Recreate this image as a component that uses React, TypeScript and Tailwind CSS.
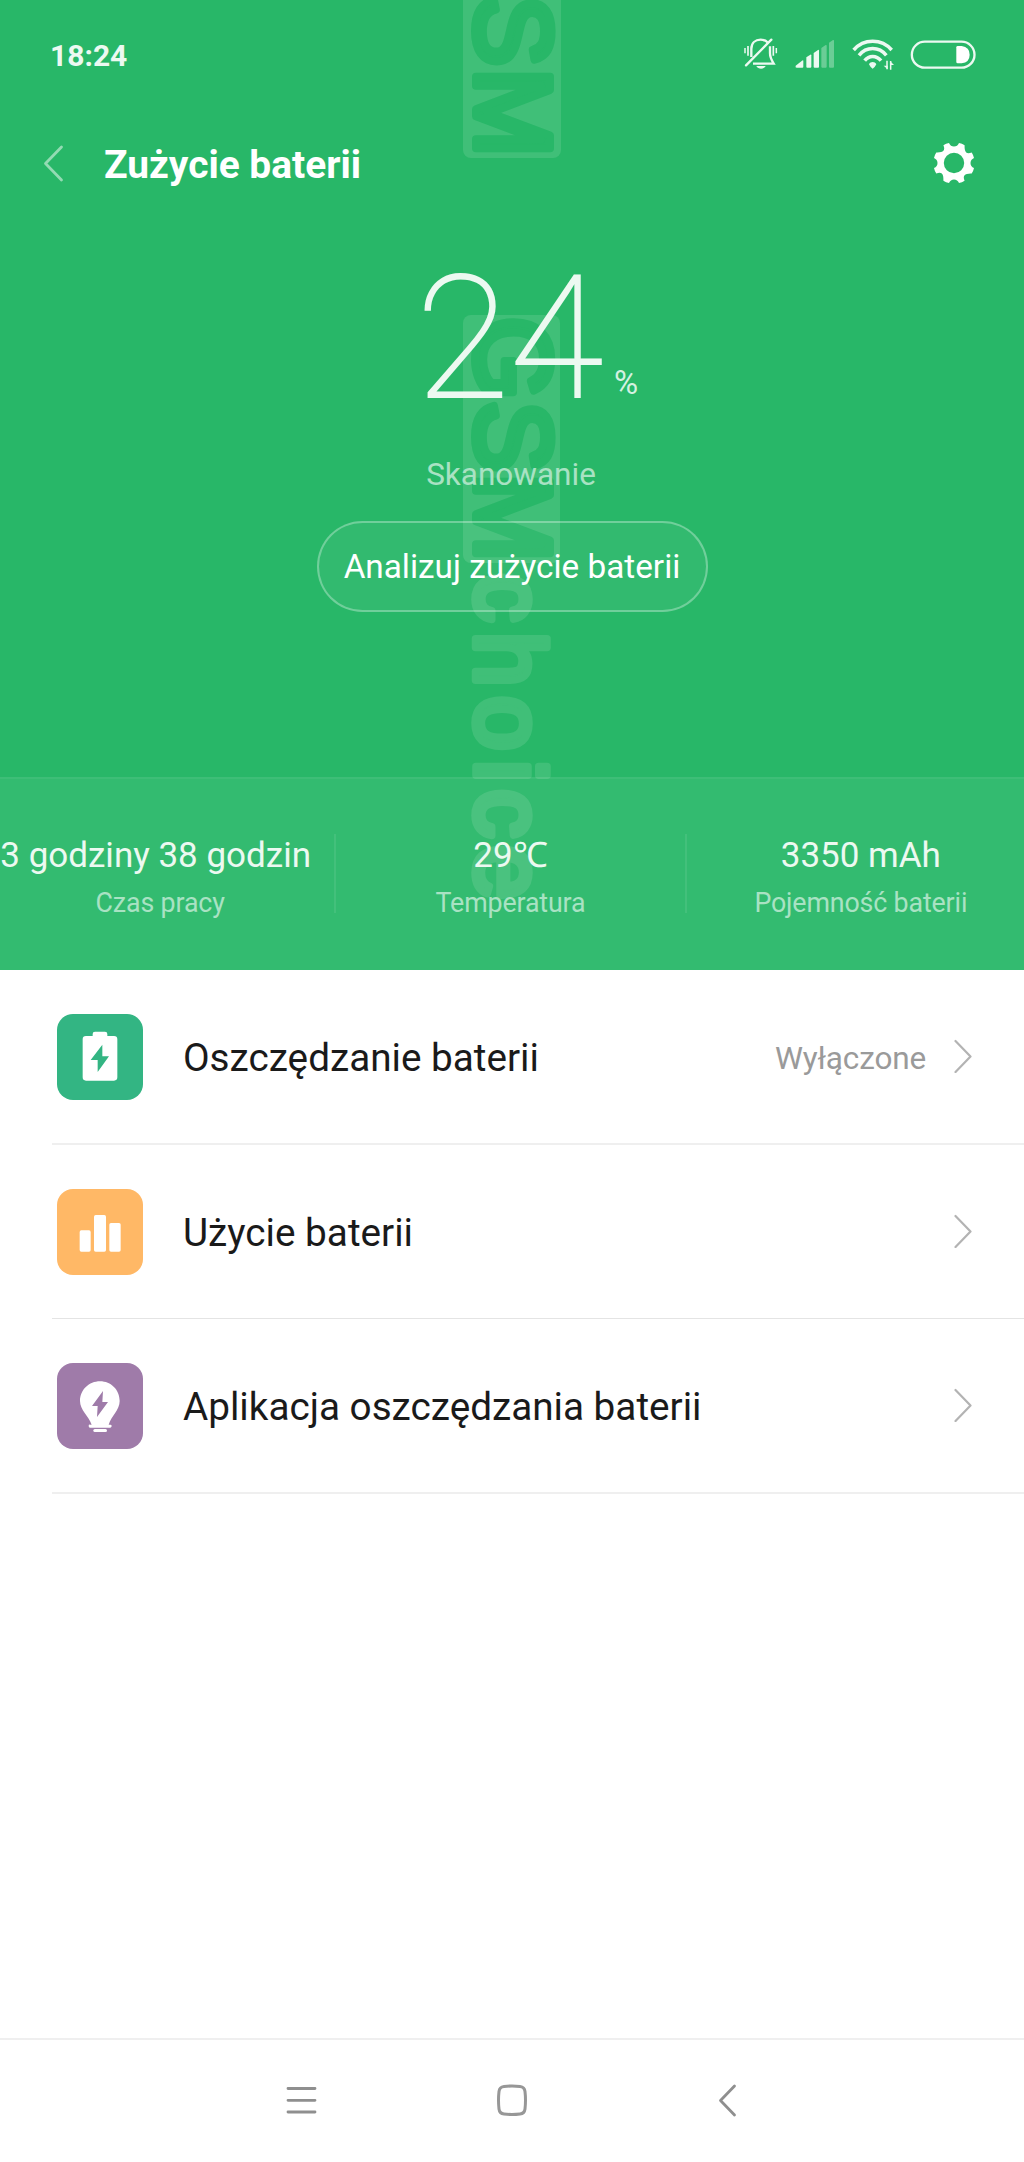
import React from 'react'

const stats = [
  { value: '3 godziny 38 godzin', label: 'Czas pracy', valueClass: 'pr-[9px]' },
  { value: '29℃', label: 'Temperatura', valueClass: '' },
  { value: '3350 mAh', label: 'Pojemność baterii', valueClass: '' },
]

function Watermark() {
  return (
    <svg className="absolute left-0 top-0 w-[1024px] h-[970px]" viewBox="0 0 1024 970" fontFamily="Liberation Sans, Arial, sans-serif" fontSize="107" strokeWidth="8" strokeLinejoin="round">
      <rect x="463" y="-90" width="98" height="248" rx="8" fill="#40bf78" />
      <rect x="463" y="315" width="97" height="248" rx="8" fill="#40bf78" />
      <g transform="translate(476 0) rotate(90)">
        <text x="-5 68" y="0" fill="#28b768" stroke="#28b768">SM</text>
        <text x="317 401 473" y="0" fill="#28b768" stroke="#28b768">GSM</text>
        <text x="573 632 696 760 789 845" y="0" fontSize="98" strokeWidth="7.500" fill="#40bf78" stroke="#40bf78">choice</text>
      </g>
    </svg>
  )
}

function StatusIcons() {
  return (
    <div className="flex items-start h-[31px]">
      <svg width="34" height="31" viewBox="59 55 102 93" fill="none" stroke="#ecf9f1" strokeWidth="7">
        <path d="M81 112V88C81 70 93 60 109 60C118 60 126 63 131 69" />
        <path d="M137 80V101C137 114 142 122 148 132H86" />
        <path d="M65 137L141 60" strokeLinecap="round" />
        <path d="M96 139H124C121 145 116 147 110 147C104 147 99 145 96 139Z" fill="#ecf9f1" stroke="none" />
        <path d="M62 85V101M156 85V101" strokeWidth="4.500" />
        <path d="M71 79V108M147 79V108" strokeWidth="5" />
      </svg>
      <svg className="ml-[17px]" width="40" height="31" viewBox="212 55 120 93" fill="#ecf9f1">
        <path d="M214 138L233 123Q237 120 237 124V141Q237 144 234 144H217Q212 144 214 138Z" />
        <path d="M246 113L258 105Q261 103 261 107V141Q261 144 258 144H249Q246 144 246 141Z" />
        <path d="M268 100L281 91Q284 89 284 93V141Q284 144 281 144H271Q268 144 268 141Z" />
        <path d="M291 85L304 76Q307 75 307 78V141Q307 144 304 144H294Q291 144 291 141Z" opacity=".34" />
        <path d="M314 69L326 61Q329 60 329 63V141Q329 144 326 144H317Q314 144 314 141Z" opacity=".34" />
      </svg>
      <svg className="ml-[17px]" width="43" height="33" viewBox="383 55 129 99" fill="none" stroke="#ecf9f1" strokeWidth="10.500">
        <path d="M388 91C418 56 472 56 502 91" />
        <path d="M404 107C426 80 464 80 486 107" />
        <path d="M421 123C434 106 456 106 470 123" />
        <path d="M434 134C438 125 452 125 456 134Q452 143 445 147Q438 143 434 134Z" fill="#ecf9f1" stroke="none" />
        <path d="M488 123V149M499 124V150" strokeWidth="4.500" />
        <path d="M478 138H490V149ZM509 136H497V124Z" fill="#ecf9f1" stroke="none" />
      </svg>
      <svg className="ml-[15px]" width="66" height="31" viewBox="559 55 198 93">
        <rect x="564.5" y="66" width="188" height="78" rx="39" fill="none" stroke="#ecf9f1" strokeWidth="7" />
        <path d="M702 79H714Q738 82 738 105Q738 128 714 131H702Q698 131 698 127V83Q698 79 702 79Z" fill="#fff" />
      </svg>
    </div>
  )
}

function Gear() {
  return (
    <svg width="42" height="42" viewBox="-21 -21 42 42" fill="#fff">
      <path
        fillRule="evenodd"
        d="M-5 -20Q-8 -19.600 -10.600 -17.700Q-9 -14 -10.600 -12.200T-17.700 -10.600Q-19.400 -8 -20 -5Q-16.500 -3.500 -16.500 0T-20 5Q-19.400 8 -17.700 10.600Q-14 9 -12.200 10.600T-10.600 17.700Q-8 19.400 -5 20Q-3.500 16.500 0 16.500T5 20Q8 19.400 10.600 17.700Q9 14 10.600 12.200T17.700 10.600Q19.400 8 20 5Q16.500 3.500 16.500 0T20 -5Q19.400 -8 17.700 -10.600Q14 -9 12.200 -10.600T10.600 -17.700Q8 -19.400 5 -20Q3.500 -16.500 0 -16.500T-5 -20ZM0 -10.200A10.200 10.200 0 1 0 0 10.200A10.200 10.200 0 1 0 0 -10.200Z"
      />
    </svg>
  )
}

function Chevron() {
  return (
    <svg className="mb-[2px]" width="18" height="34" viewBox="0 0 18 34" fill="none" stroke="#b3b3b3" strokeWidth="2.200" strokeLinecap="round" strokeLinejoin="round">
      <path d="M1.500 2L16.500 17.500L1.500 33" />
    </svg>
  )
}

function SaverIcon() {
  return (
    <svg width="86" height="86" viewBox="0 0 258 258">
      <path fill="#fff" d="M107 60Q107 53 114 53H144Q151 53 151 60V66H171Q181 66 181 76V190Q181 200 171 200H87Q77 200 77 190V76Q77 66 87 66H107Z" />
      <path fill="#33b583" d="M136 92L101 138H122V174L156 127H136Z" />
    </svg>
  )
}

function UsageIcon() {
  return (
    <svg width="86" height="86" viewBox="0 0 258 258" fill="#fff">
      <rect x="68" y="124" width="33" height="64" rx="5" />
      <rect x="111" y="78" width="36" height="110" rx="5" />
      <rect x="157" y="102" width="34" height="86" rx="5" />
    </svg>
  )
}

function BulbIcon() {
  return (
    <svg width="86" height="86" viewBox="0 0 258 258" fill="#fff">
      <path d="M129 55C162 55 188 81 188 114C188 142 163 158 155 185H160Q164 185 164 189T160 194H99Q95 194 95 189T99 185H104C95 158 69 142 69 114C69 81 96 55 129 55Z" />
      <rect x="109" y="198" width="41" height="9" rx="4.500" />
      <path fill="#9f7ba9" d="M138 84L105 129H122L120 162L153 117H136Z" />
    </svg>
  )
}

function Row({ icon, color, title, note, className }: { icon: React.ReactNode; color: string; title: string; note?: string; className: string }) {
  return (
    <div className={`ml-[52px] pl-[5px] pr-[52px] flex items-center ${className}`}>
      <div className={`size-[86px] rounded-[16px] ${color}`}>{icon}</div>
      <span className="ml-[40px] pt-[4px] flex-1 text-[38.700px] text-[#1a1a1a]">{title}</span>
      {note && <span className="mr-[28px] pt-[4px] text-[31.500px] tracking-[-0.15px] text-[#9a9a9a]">{note}</span>}
      <Chevron />
    </div>
  )
}

export default function App() {
  return (
    <div className="w-[1024px] h-[2162px] overflow-hidden flex flex-col bg-white font-[Roboto,sans-serif]">
      <div className="relative h-[970px] bg-[#28b768] text-white overflow-hidden">
        <Watermark />
        <div className="relative h-full flex flex-col">
          <div className="h-[108px] pt-[38px] pl-[50px] pr-[48px] flex justify-between">
            <span className="text-[30px] leading-[35px] font-bold text-[#ecf9f1]">18:24</span>
            <StatusIcons />
          </div>
          <header className="h-[110px] pl-[43px] pr-[49px] flex items-center">
            <svg width="21" height="38" viewBox="0 0 21 38" fill="none" stroke="#93dbb3" strokeWidth="2.800" strokeLinecap="round" strokeLinejoin="round">
              <path d="M18.500 3L2.500 19.500L18.500 36" />
            </svg>
            <h1 className="ml-[40px] pt-[5px] flex-1 text-[38.900px] font-bold">Zużycie baterii</h1>
            <Gear />
          </header>
          <div className="h-[559px] pt-[33px] flex flex-col items-center">
            <div className="h-[174px] pl-[30px] flex items-start">
              <span className="text-[171px] leading-[176px] font-thin text-[#ecf9f1] [-webkit-text-stroke:1.800px_#ecf9f1]">24</span>
              <span className="mt-[115px] ml-[11px] text-[33px] leading-[34px] text-[#d4f1e1]">%</span>
            </div>
            <p className="mt-[30px] mr-[2px] text-[31.500px] leading-[40px] text-[#a9e2c3]">Skanowanie</p>
            <button className="mt-[26px] w-[391px] h-[91px] rounded-full border-2 border-white/30 bg-white/5 text-[33.300px]">Analizuj zużycie baterii</button>
          </div>
          <div className="h-[193px] -ml-[14px] -mr-[11px] pt-[55px] border-t-2 border-white/5 bg-white/5 flex">
            {stats.map((s) => (
              <div key={s.label} className="h-[79px] flex-1 shrink-0 text-center border-r-2 border-white/8 last:border-0 whitespace-nowrap">
                <div className={`pt-px text-[35px] leading-[42px] text-[#ecf9f1] ${s.valueClass}`}>{s.value}</div>
                <div className="mt-[10px] text-[26.800px] leading-[32px] tracking-[-0.15px] text-[#a9e2c3]">{s.label}</div>
              </div>
            ))}
          </div>
        </div>
      </div>

      <div className="flex-1">
        <Row icon={<SaverIcon />} color="bg-[#33b583]" title="Oszczędzanie baterii" note="Wyłączone" className="h-[175px] border-b-2 border-[#efefef]" />
        <Row icon={<UsageIcon />} color="bg-[#ffb866]" title="Użycie baterii" className="h-[174px] border-b border-[#e4e4e4]" />
        <Row icon={<BulbIcon />} color="bg-[#9f7ba9]" title="Aplikacja oszczędzania baterii" className="h-[175px] border-b-2 border-[#efefef]" />
      </div>

      <nav className="h-[124px] pt-[42px] pl-[285px] border-t-2 border-[#efefef] flex">
        <svg width="32" height="36" viewBox="0 0 32 36" stroke="#8f8f8f" strokeWidth="2.800" strokeLinecap="round">
          <path d="M3 6.500H30M3 18.300H30M3 30H30" />
        </svg>
        <svg className="ml-[178px]" width="34" height="36" viewBox="0 0 34 36" fill="none" stroke="#979797" strokeWidth="3">
          <path d="M9 4.500Q17 3.500 25 4.500Q29.500 5 30 9.500Q31 18 30 27Q29.500 31.500 25 32Q17 33 9 32Q4.500 31.500 4 27Q3 18 4 9.500Q4.500 5 9 4.500Z" />
        </svg>
        <svg className="ml-[187px]" width="24" height="36" viewBox="0 0 24 36" fill="none" stroke="#8f8f8f" strokeWidth="2.800" strokeLinecap="round" strokeLinejoin="round">
          <path d="M18.500 4L4.500 18.500L18.500 33" />
        </svg>
      </nav>
    </div>
  )
}
